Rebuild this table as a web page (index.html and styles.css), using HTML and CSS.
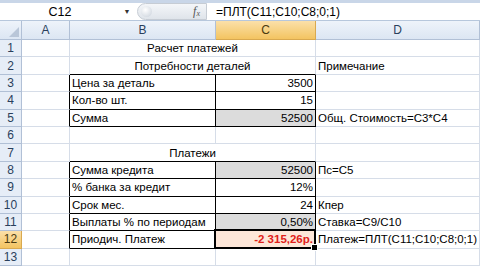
FILE: index.html
```html
<!DOCTYPE html>
<html>
<head>
<meta charset="utf-8">
<link rel="stylesheet" href="styles.css">
</head>
<body>
<div class="app">
  <div class="fbar">
    <div class="namebox">C12</div>
    <div class="drop">▼</div>
    <div class="fxbtn"><span class="knob"></span><span class="fx">f<sub>x</sub></span></div>
    <div class="formula">=ПЛТ(C11;C10;C8;0;1)</div>
  </div>
  <div class="sheet">
    <div class="ch corner"><svg width="10" height="10" viewBox="0 0 10 10"><path d="M10 0 L10 10 L0 10 Z" fill="#b9c6d8"/></svg></div>
    <div class="ch">A</div>
    <div class="ch">B</div>
    <div class="ch sel">C</div>
    <div class="ch">D</div>

    <div class="rh">1</div><div class="c"></div><div class="c span ctr">Расчет платежей</div><div class="c"></div>
    <div class="rh">2</div><div class="c"></div><div class="c span ctr bb">Потребности деталей</div><div class="c">Примечание</div>
    <div class="rh">3</div><div class="c rb"></div><div class="c t">Цена за деталь</div><div class="c t num">3500</div><div class="c"></div>
    <div class="rh">4</div><div class="c rb"></div><div class="c t">Кол-во шт.</div><div class="c t num">15</div><div class="c"></div>
    <div class="rh">5</div><div class="c rb"></div><div class="c t">Сумма</div><div class="c t num gray">52500</div><div class="c">Общ. Стоимость=C3*C4</div>
    <div class="rh">6</div><div class="c"></div><div class="c"></div><div class="c"></div><div class="c"></div>
    <div class="rh">7</div><div class="c"></div><div class="c span ctr bb">Платежи</div><div class="c"></div>
    <div class="rh">8</div><div class="c rb"></div><div class="c t">Сумма кредита</div><div class="c t num gray">52500</div><div class="c">Пс=C5</div>
    <div class="rh">9</div><div class="c rb"></div><div class="c t">% банка за кредит</div><div class="c t num">12%</div><div class="c"></div>
    <div class="rh">10</div><div class="c rb"></div><div class="c t">Срок мес.</div><div class="c t num">24</div><div class="c">Кпер</div>
    <div class="rh">11</div><div class="c rb"></div><div class="c t">Выплаты % по периодам</div><div class="c t num gray">0,50%</div><div class="c">Ставка=C9/C10</div>
    <div class="rh sel">12</div><div class="c rb"></div><div class="c t">Приодич. Платеж</div><div class="c t num peach active">-2 315,26р.</div><div class="c">Платеж=ПЛТ(C11;C10;C8;0;1)</div>
    <div class="rh">13</div><div class="c"></div><div class="c"></div><div class="c"></div><div class="c"></div>
  </div>
</div>
</body>
</html>
```
FILE: styles.css
```css
* { box-sizing: border-box; }
body { margin: 0; background: #fff; font-family: "Liberation Sans", Arial, sans-serif; font-size: 11.5px; color: #000; }
.app { width: 480px; height: 266px; overflow: hidden; }
.fbar {
  height: 21px;
  display: flex;
  align-items: center;
  border-top: 3px solid #c9d6e8;
  border-bottom: 1px solid #b7c7dc;
  background: #fff;
}
.namebox { width: 120px; text-align: center; font-size: 12.5px; }
.drop { width: 14px; font-size: 7px; color: #333; text-align: center; }
.fxbtn {
  position: relative;
  width: 70px; height: 17px;
  margin-left: 3px;
  border-radius: 9px 0 0 9px;
  background: linear-gradient(#f4f6f9, #dfe4ea);
  border: 1px solid #c6ccd4;
  display: flex; align-items: center; justify-content: flex-end;
  padding-right: 6px;
}
.knob { position: absolute; left: 3px; top: 2px; width: 11px; height: 11px; border-radius: 50%; background: radial-gradient(circle at 40% 35%, #fff, #c8d0da); }
.fx { font-family: "Liberation Serif", serif; font-style: italic; font-size: 12px; color: #555; }
.fx sub { font-size: 8px; vertical-align: -1px; }
.formula { margin-left: 9px; font-size: 12px; }

.sheet {
  display: grid;
  grid-template-columns: 22px 48px 146px 100px 164px;
  grid-template-rows: 19px repeat(13, 17.4px);
}
.ch, .rh {
  background: linear-gradient(#eef3fa, #dce6f3);
  color: #2a3f5c;
  border-right: 1px solid #b1c0d6;
  border-bottom: 1px solid #b1c0d6;
  display: flex; align-items: center; justify-content: center;
  font-size: 12px;
}
.rh { background: #e6edf7; }
.ch.sel, .rh.sel { background: linear-gradient(#fbe0a9, #f3c461); color: #4a3a10; border-color: #d9a94f; }
.corner { justify-content: flex-end; align-items: flex-end; padding: 0 2px 2px 0; }
.c {
  border-right: 1px solid #d6dde8;
  border-bottom: 1px solid #d6dde8;
  display: flex; align-items: center;
  padding: 0 2px;
  white-space: nowrap;
  overflow: visible;
}
.span { grid-column: span 2; }
.ctr { justify-content: center; }
.num { justify-content: flex-end; }
.t { border-right-color: #000; border-bottom-color: #000; }
.rb { border-right-color: #000; }
.bb { border-bottom-color: #000; }
.gray { background: #dcdcdc; }
.peach { background: #fde6d8; color: #e0201a; font-weight: bold; }
.active { position: relative; }
.active::after {
  content: "";
  position: absolute;
  left: -2px; top: -2px; right: -1px; bottom: -1px;
  border: 2px solid #000;
}
.active::before {
  content: "";
  position: absolute;
  right: -3px; bottom: -3px;
  width: 5px; height: 5px;
  background: #000;
  border: 1px solid #fff;
  z-index: 2;
}
```
